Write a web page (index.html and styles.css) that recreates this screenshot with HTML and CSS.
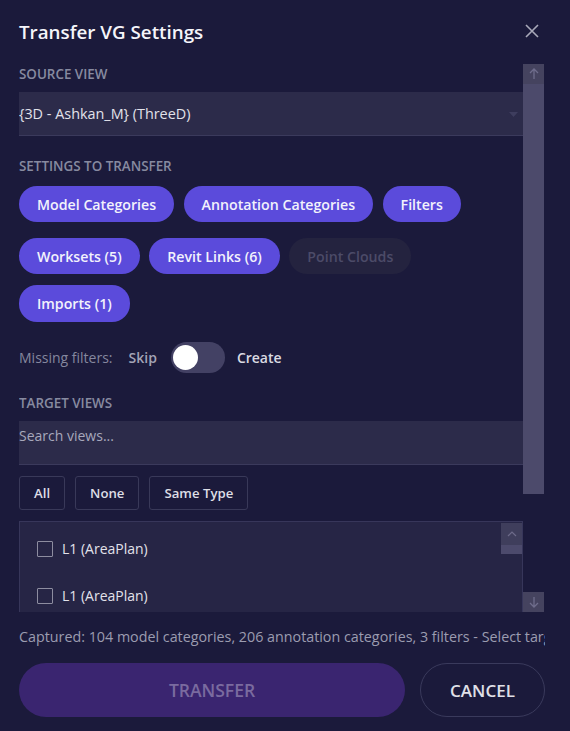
FILE: index.html
```html
<!DOCTYPE html>
<html lang="en">
<head>
<meta charset="utf-8">
<title>Transfer VG Settings</title>
<link rel="stylesheet" href="styles.css">
</head>
<body>
<div class="dialog">
  <header class="header">
    <h1 class="title">Transfer VG Settings</h1>
    <button class="close" aria-label="Close">
      <svg width="14" height="14" viewBox="0 0 14 14"><path d="M1 1L13 13M13 1L1 13" stroke="#a9a9b9" stroke-width="1.6" fill="none"/></svg>
    </button>
  </header>

  <div class="scroller">
    <div class="content">
      <div class="label">SOURCE VIEW</div>
      <div class="select">
        <span class="select-text">{3D - Ashkan_M} (ThreeD)</span>
        <svg class="caret" width="9" height="5" viewBox="0 0 9 5"><path d="M0 0H9L4.5 5Z" fill="#3e3d5e"/></svg>
      </div>

      <div class="label label-gap">SETTINGS TO TRANSFER</div>
      <div class="pill-row">
        <span class="pill">Model Categories</span>
        <span class="pill">Annotation Categories</span>
        <span class="pill">Filters</span>
      </div>
      <div class="pill-row row2">
        <span class="pill">Worksets (5)</span>
        <span class="pill">Revit Links (6)</span>
        <span class="pill pill-off">Point Clouds</span>
      </div>
      <div class="pill-row row3">
        <span class="pill">Imports (1)</span>
      </div>

      <div class="missing">
        <span class="missing-label">Missing filters:</span>
        <span class="skip">Skip</span>
        <span class="toggle"><span class="knob"></span></span>
        <span class="create">Create</span>
      </div>

      <div class="label label-gap label-target">TARGET VIEWS</div>
      <div class="search">Search views...</div>

      <div class="btn-row">
        <span class="sbtn">All</span>
        <span class="sbtn">None</span>
        <span class="sbtn">Same Type</span>
      </div>

      <div class="list">
        <div class="list-items">
          <div class="item"><span class="check"></span><span>L1 (AreaPlan)</span></div>
          <div class="item"><span class="check"></span><span>L1 (AreaPlan)</span></div>
          <div class="item"><span class="check"></span><span>L1 (AreaPlan)</span></div>
        </div>
        <div class="list-bar">
          <span class="list-up">
            <svg width="10" height="6" viewBox="0 0 10 6"><path d="M1 5L5 1L9 5" stroke="#6d6b8a" stroke-width="1.2" fill="none"/></svg>
          </span>
          <span class="list-thumb"></span>
        </div>
      </div>
    </div>

    <div class="vbar">
      <span class="vbtn">
        <svg width="10" height="12" viewBox="0 0 10 12"><path d="M5 11V1M1 5L5 1L9 5" stroke="#6f6d8c" stroke-width="1.3" fill="none"/></svg>
      </span>
      <span class="vthumb"></span>
      <span class="vtrack"></span>
      <span class="vbtn">
        <svg width="10" height="12" viewBox="0 0 10 12"><path d="M5 1V11M1 7L5 11L9 7" stroke="#6f6d8c" stroke-width="1.3" fill="none"/></svg>
      </span>
    </div>
  </div>

  <div class="status"><span class="status-text">Captured: 104 model categories, 206 annotation categories, 3 filters - Select target views</span></div>

  <div class="actions">
    <button class="transfer">TRANSFER</button>
    <button class="cancel">CANCEL</button>
  </div>
</div>
</body>
</html>
```
FILE: styles.css
```css
* { box-sizing: border-box; }

html, body {
  margin: 0;
  padding: 0;
  background: #1b1a3b;
}

body {
  font-family: "Open Sans", "Noto Sans", "Liberation Sans", sans-serif;
  color: #dcdce6;
  width: 570px;
  height: 731px;
  overflow: hidden;
}

.dialog {
  width: 570px;
  height: 731px;
  display: flex;
  flex-direction: column;
}

.header {
  height: 64px;
  display: flex;
  align-items: flex-start;
  justify-content: space-between;
  padding: 19px 31px 0 19px;
}

.title {
  margin: 0;
  font-size: 18.8px;
  font-weight: 600;
  color: #f5f5fa;
  line-height: 26px;
}

.close {
  background: none;
  border: 0;
  padding: 0;
  margin-top: 5px;
  width: 14px;
  height: 14px;
  display: flex;
}

.scroller {
  height: 548px;
  display: flex;
  padding-left: 19px;
}

.content {
  width: 504px;
  height: 548px;
  overflow: hidden;
}

.label {
  font-size: 13.4px;
  font-weight: 600;
  color: #878aa0;
  line-height: 18px;
  margin-top: 1px;
  margin-bottom: 9px;
}

.label-gap {
  margin-top: 21px;
  margin-bottom: 11px;
}

.label-target {
  margin-bottom: 9px;
}

.select {
  height: 44px;
  background: #2c2b4a;
  border-bottom: 1px solid #3b3a5c;
  display: flex;
  align-items: center;
  justify-content: space-between;
  padding-right: 5px;
}

.select-text {
  font-size: 14.4px;
  color: #e2e2ea;
}

.caret { margin-top: 1px; }

.pill-row {
  display: flex;
  gap: 9.5px;
}

.row2 { margin-top: 16px; }
.row3 { margin-top: 11px; }

.pill {
  height: 36px;
  display: inline-flex;
  align-items: center;
  padding: 0 18px;
  border-radius: 18px;
  background: #5b4bdb;
  color: #f2f2fc;
  font-size: 14.2px;
  font-weight: 600;
}

.row3 .pill { height: 37px; }

.pill-off {
  background: #24233f;
  color: #4c4b68;
}

.missing {
  margin-top: 20px;
  height: 31px;
  display: flex;
  align-items: center;
  font-size: 14px;
}

.missing-label { color: #85879e; }
.skip { color: #a3a4b6; margin-left: 16px; font-weight: 600; }
.create { color: #dadae2; margin-left: 12px; font-weight: 600; }

.toggle {
  margin-left: 14px;
  width: 54px;
  height: 31px;
  border-radius: 16px;
  background: #434164;
  display: flex;
  align-items: center;
  padding-left: 2px;
}

.knob {
  width: 25px;
  height: 25px;
  border-radius: 50%;
  background: #ffffff;
}

.search {
  height: 44px;
  background: #2c2b4a;
  border-bottom: 1px solid #3b3a5c;
  font-size: 14px;
  color: #a7a8bc;
  padding-top: 5px;
  line-height: 20px;
}

.btn-row {
  margin-top: 11px;
  display: flex;
  gap: 10px;
}

.sbtn {
  height: 34px;
  display: inline-flex;
  align-items: center;
  padding: 0 14px;
  border: 1px solid #393959;
  border-radius: 3px;
  font-size: 13.2px;
  font-weight: 600;
  color: #dedee6;
}

.list {
  margin-top: 11px;
  height: 200px;
  background: #262545;
  border: 1px solid #37365a;
  display: flex;
}

.list-items {
  flex: 1;
  padding-top: 3px;
}

.item {
  height: 47px;
  display: flex;
  align-items: center;
  padding-left: 17px;
  font-size: 14px;
  color: #e2e2ea;
}

.check {
  width: 16px;
  height: 16px;
  border: 1.5px solid #8d8da0;
  border-radius: 1px;
  margin-right: 9px;
}

.list-bar {
  width: 21px;
  display: flex;
  flex-direction: column;
  margin-top: 1px;
}

.list-up {
  height: 22px;
  background: #3f3e5c;
  display: flex;
  align-items: center;
  justify-content: center;
}

.list-thumb {
  height: 9px;
  background: #4c4a6c;
}

.vbar {
  width: 21px;
  display: flex;
  flex-direction: column;
}

.vbtn {
  height: 20px;
  background: #45435f;
  display: flex;
  align-items: center;
  justify-content: center;
}

.vthumb {
  height: 410px;
  background: #4c4a6b;
}

.vtrack { flex: 1; }

.status {
  margin: 16px 25px 0 19px;
  height: 18px;
  overflow: hidden;
  line-height: 18px;
}

.status-text {
  display: block;
  width: 650px;
  font-size: 14.3px;
  color: #9b9cb0;
  white-space: nowrap;
}

.actions {
  margin-top: 17px;
  padding-left: 19px;
  display: flex;
  gap: 15px;
}

.transfer {
  width: 386px;
  height: 54px;
  border: 0;
  border-radius: 27px;
  background: #3a2570;
  color: #7a6b9f;
  font-family: inherit;
  font-size: 17.5px;
  font-weight: 600;
}

.cancel {
  width: 125px;
  height: 54px;
  border: 1px solid #3a3a5c;
  border-radius: 27px;
  background: transparent;
  color: #e0e0e8;
  font-family: inherit;
  font-size: 17px;
  font-weight: 600;
}
```
